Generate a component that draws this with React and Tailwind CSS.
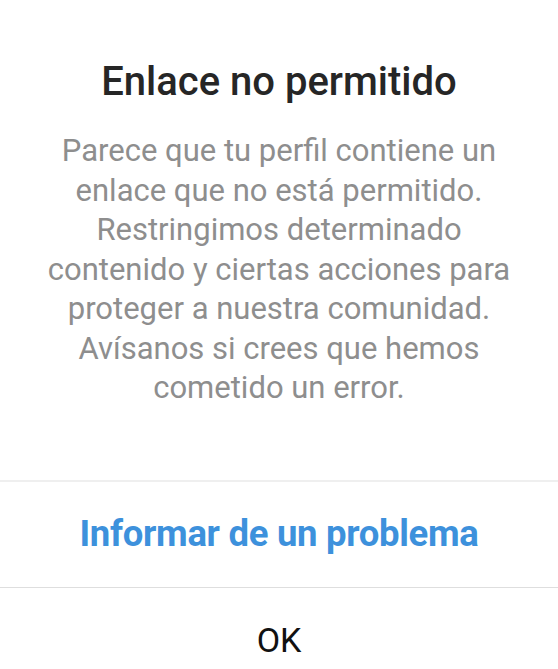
import React from 'react';

const App = () => {
  return (
    <div className="w-[558px] h-[669px] overflow-hidden bg-white font-['Roboto',sans-serif] flex flex-col">
      {/* header + message */}
      <div className="shrink-0 flex flex-col items-center pt-[56px] px-2 h-[480px]">
        <h1 className="text-[40px] leading-[52px] font-medium text-[#262626]">
          Enlace no permitido
        </h1>
        <p className="mt-[23px] text-center text-[31px] leading-[39.5px] text-[#8e8e8e]">
          Parece que tu perfil contiene un
          <br />
          enlace que no está permitido.
          <br />
          Restringimos determinado
          <br />
          contenido y ciertas acciones para
          <br />
          proteger a nuestra comunidad.
          <br />
          Avísanos si crees que hemos
          <br />
          cometido un error.
        </p>
      </div>

      {/* actions */}
      <button className="shrink-0 h-[107px] border-t-2 border-[#efefef] flex items-center justify-center text-[36.5px] font-bold text-[#3d91dc] tracking-[-0.3px]">
        Informar de un problema
      </button>
      <button className="shrink-0 h-[106px] border-t border-[#dedede] flex items-center justify-center text-[34px] text-[#111]">
        OK
      </button>
    </div>
  );
};

export default App;
